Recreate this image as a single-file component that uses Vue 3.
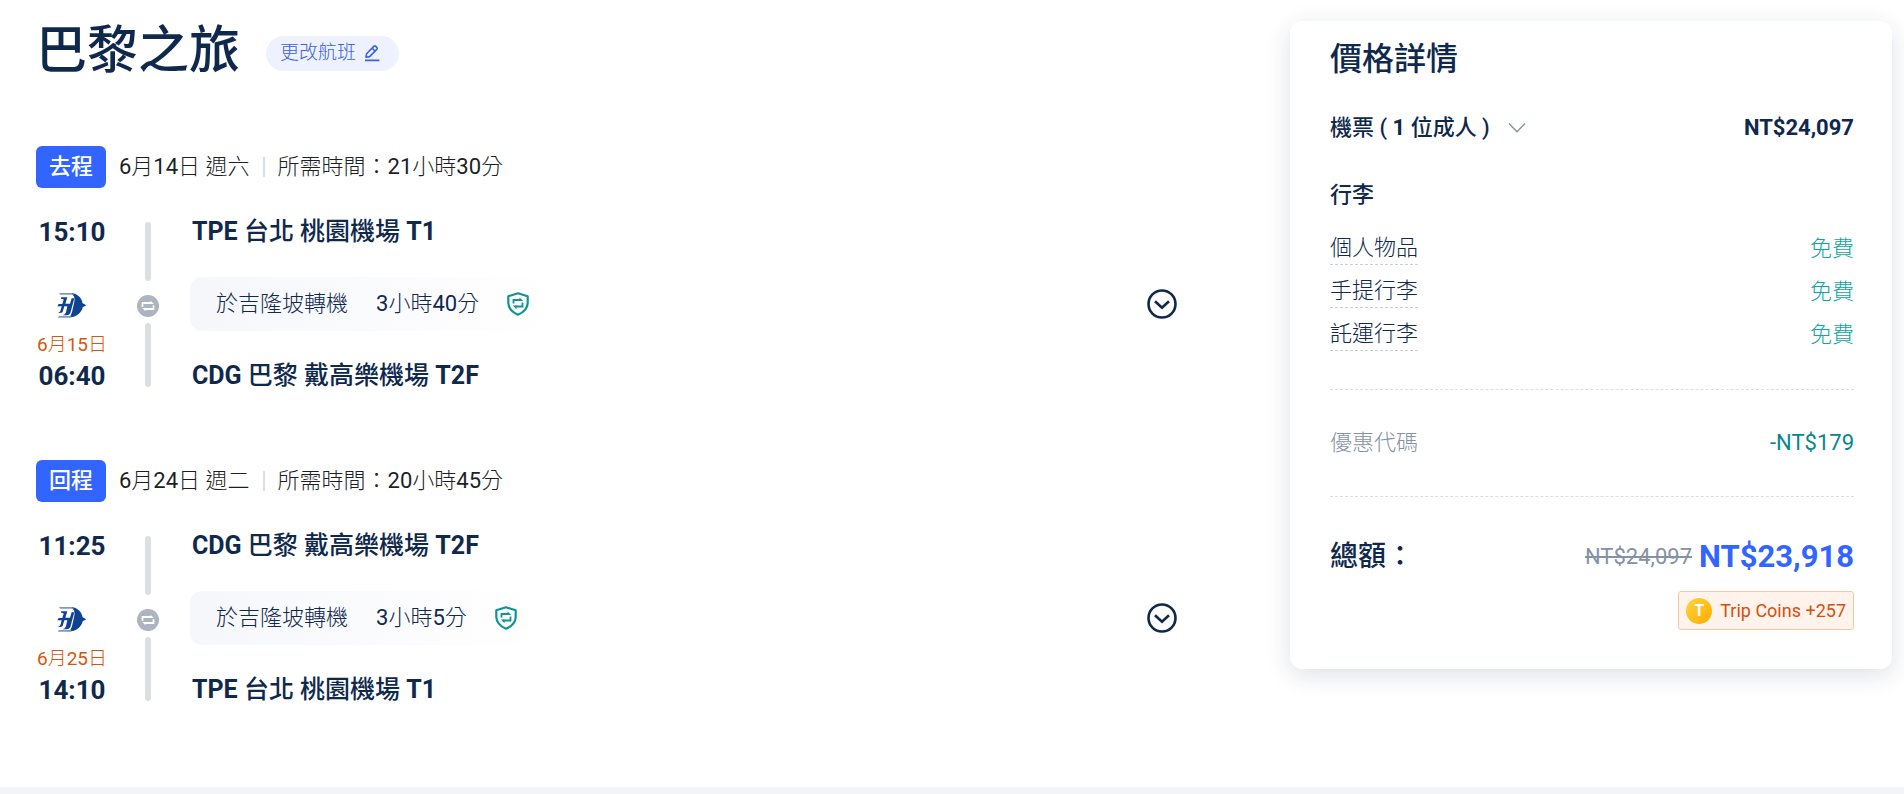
<script setup>
const trips = [
  {
    tag: '去程',
    date: '6月14日 週六',
    duration: '21小時30分',
    depart: '15:10',
    from: { code: 'TPE', name: '台北 桃園機場', terminal: 'T1' },
    stop: '於吉隆坡轉機',
    wait: '3小時40分',
    nextDay: '6月15日',
    arrive: '06:40',
    to: { code: 'CDG', name: '巴黎 戴高樂機場', terminal: 'T2F' }
  },
  {
    tag: '回程',
    date: '6月24日 週二',
    duration: '20小時45分',
    depart: '11:25',
    from: { code: 'CDG', name: '巴黎 戴高樂機場', terminal: 'T2F' },
    stop: '於吉隆坡轉機',
    wait: '3小時5分',
    nextDay: '6月25日',
    arrive: '14:10',
    to: { code: 'TPE', name: '台北 桃園機場', terminal: 'T1' }
  }
]
const baggage = ['個人物品', '手提行李', '託運行李']
</script>

<template>
  <div class="page">
    <main class="content">
      <section class="trip">
        <header class="trip-head">
          <h1>巴黎之旅</h1>
          <button type="button" class="change">
            更改航班
            <svg width="18" height="18" viewBox="0 0 18 18" fill="none" stroke="currentColor" stroke-width="1.6" stroke-linejoin="round" aria-hidden="true">
              <path d="M3 13.2 3.6 9.8 10.8 2.4Q11.8 1.5 12.8 2.4L13.8 3.4Q14.7 4.4 13.8 5.4L6.6 12.6Z" />
              <path d="M9.2 4.2 12 7M2 16.4H16.4" />
            </svg>
          </button>
        </header>

        <article v-for="trip in trips" :key="trip.tag" class="leg">
          <div class="leg-head">
            <span class="tag">{{ trip.tag }}</span>
            <span>{{ trip.date }}</span>
            <i class="bar"></i>
            <span>所需時間：{{ trip.duration }}</span>
          </div>
          <div class="leg-body">
            <div class="times">
              <time class="time">{{ trip.depart }}</time>
              <svg class="airline" width="30" height="25" viewBox="0 0 90 75" role="img" aria-label="Malaysia Airlines">
                <path fill="#0f4290" d="M40 0C60 1 73 12 77 31L88 37L77 43C73 61 58 73 34 74Q42 70 45 58L52 26Q56 8 40 0Z" />
                <path fill="#7f9bc4" d="M6 0H42L52 5H10Z" />
                <path fill="#7f9bc4" d="M2 74H36L44 69H6Z" />
                <path fill="#0f4290" d="M12 13H31L25 32H39L44 16H52L40 60Q37 67 28 67H17Q25 65 27 58L31 40H22L17 56Q15 60 8 60H3Q9 58 11 52L14 40H1L5 33H16L20 20Q20 17 12 17Z" />
              </svg>
              <span class="next-day">{{ trip.nextDay }}</span>
              <time class="time">{{ trip.arrive }}</time>
            </div>
            <div class="track">
              <i class="line"></i>
              <svg width="22" height="22" viewBox="0 0 22 22" fill="none" aria-hidden="true">
                <circle cx="11" cy="11" r="11" fill="#acb4bf" />
                <path stroke="#fff" stroke-width="1.8" d="M5.500 11.800V8H15M16.500 10.200V14H7" />
                <path fill="#fff" d="M13.500 5.800 17 8.900H13.500ZM8.500 16.300 5 13.100H8.500Z" />
              </svg>
              <i class="line lower"></i>
            </div>
            <div class="stops">
              <p class="airport"><b>{{ trip.from.code }}</b> {{ trip.from.name }} <b>{{ trip.from.terminal }}</b></p>
              <div class="middle">
                <div class="transfer">
                  <span>{{ trip.stop }}</span>
                  <span>{{ trip.wait }}</span>
                  <svg width="22" height="24" viewBox="0 0 22 24" fill="none" stroke="#0e9398" aria-hidden="true">
                    <path stroke-width="2.2" stroke-linejoin="round" d="M11 1.3 20.7 4.3V11Q20.4 18.8 11 22.7Q1.6 18.8 1.3 11V4.3Z" />
                    <path stroke-width="1.8" d="M6.500 11.500V8H14M15.500 10.500V14.500H8" />
                    <path fill="#0e9398" stroke="none" d="M12.500 5.500 16.200 8.900H12.500ZM9.500 17.200 5.800 13.600H9.500Z" />
                  </svg>
                </div>
                <button type="button" class="expand" aria-label="展開航班詳情">
                  <svg width="30" height="30" viewBox="0 0 30 30" fill="none" stroke="currentColor" stroke-width="2.6" aria-hidden="true">
                    <circle cx="15" cy="15" r="13.5" />
                    <path d="M8 12.2 15 18.8 22 12.2" />
                  </svg>
                </button>
              </div>
              <p class="airport"><b>{{ trip.to.code }}</b> {{ trip.to.name }} <b>{{ trip.to.terminal }}</b></p>
            </div>
          </div>
        </article>
      </section>

      <aside class="card">
        <h2>價格詳情</h2>
        <div class="row ticket">
          <button type="button" class="toggle">
            <span>機票 ( <b>1</b> 位成人 )</span>
            <svg width="18" height="12" viewBox="0 0 18 12" fill="none" stroke="#8592a6" stroke-width="1.5" aria-hidden="true">
              <path d="M1 1.5 9 9.7 17 1.5" />
            </svg>
          </button>
          <strong>NT$24,097</strong>
        </div>
        <h3>行李</h3>
        <div v-for="item in baggage" :key="item" class="row bag">
          <span class="hint">{{ item }}</span>
          <span class="free">免費</span>
        </div>
        <div class="row promo">
          <span>優惠代碼</span>
          <span class="off">-NT$179</span>
        </div>
        <div class="row total">
          <strong class="total-label">總額：</strong>
          <div class="amounts">
            <s>NT$24,097</s>
            <strong class="final">NT$23,918</strong>
          </div>
        </div>
        <div class="coins-row">
          <span class="coins"><b class="coin">T</b>Trip Coins +257</span>
        </div>
      </aside>
    </main>
    <div class="strip"></div>
  </div>
</template>

<style>
body {
  margin: 0;
  background: #fff;
}
</style>

<style scoped>
.page {
  display: flex;
  flex-direction: column;
  min-height: 100vh;
  color: #0f294d;
  font-family: Roboto, "Noto Sans CJK TC Light", "Noto Sans CJK TC", sans-serif;
  font-size: 22px;
  font-weight: 400;
  line-height: 32px;
}
h1, h2, h3, p {
  margin: 0;
}
h1, h2, h3, .tag, .airport, .ticket, .total {
  font-family: Roboto, "Noto Sans CJK TC", sans-serif;
}
b {
  font-weight: 700;
}
button {
  padding: 0;
  border: 0;
  background: none;
  color: inherit;
  font: inherit;
  cursor: pointer;
}
.content {
  flex: 1;
  display: grid;
  grid-template-columns: minmax(0, 1fr) minmax(440px, 602px);
  align-items: start;
  gap: 112px;
  padding: 21px 12px 40px 36px;
}
.strip {
  height: 7px;
  background: #f2f4f7;
}
.trip-head {
  display: flex;
  align-items: center;
  gap: 26px;
  height: 60px;
}
h1 {
  font-size: 51px;
  font-weight: 500;
  line-height: 60px;
}
.change {
  display: flex;
  align-items: center;
  gap: 7px;
  height: 35px;
  margin-top: 4px;
  padding: 0 18px 0 14px;
  border-radius: 18px;
  background: #eef2ff;
  color: #3a61e0;
  font-size: 19px;
  white-space: nowrap;
}
.leg {
  margin-top: 65px;
}
.leg + .leg {
  margin-top: 67px;
}
.leg-head {
  display: flex;
  align-items: center;
  height: 42px;
  color: #1c1f26;
}
.tag {
  width: 70px;
  margin-right: 13px;
  border-radius: 6px;
  background: #3264ff;
  color: #fff;
  font-weight: 500;
  line-height: 42px;
  text-align: center;
}
.bar {
  width: 2px;
  height: 20px;
  margin: 0 13px;
  background: #dadfe6;
}
.leg-body {
  display: grid;
  grid-template-columns: 70px 22px minmax(0, 1fr);
  column-gap: 31px;
  margin-top: 27px;
}
.times {
  display: flex;
  flex-direction: column;
  align-items: center;
  padding-left: 2px;
}
.time {
  font-size: 26px;
  font-weight: 700;
  line-height: 34px;
}
.airline {
  margin: 44px 0 13px;
}
.next-day {
  color: #d4570f;
  font-size: 19px;
  line-height: 28px;
  white-space: nowrap;
}
.track {
  display: flex;
  flex-direction: column;
  align-items: center;
  padding: 7px 0 6px;
}
.track svg {
  flex: none;
  margin: 14px 0 6px;
}
.line {
  flex: 10;
  width: 6px;
  border-radius: 3px;
  background: #dadfe6;
}
.lower {
  flex-grow: 11;
}
.stops {
  display: flex;
  flex-direction: column;
  justify-content: space-between;
}
.airport {
  padding-left: 2px;
  font-size: 25px;
  font-weight: 500;
  line-height: 34px;
}
.middle {
  display: flex;
  align-items: center;
  justify-content: space-between;
}
.transfer {
  display: flex;
  align-items: center;
  gap: 28px;
  height: 54px;
  padding: 0 26px;
  border-radius: 12px;
  background: linear-gradient(90deg, #f6f7fb, #fff);
}
.expand {
  display: flex;
  margin-right: 1px;
}
.card {
  box-sizing: border-box;
  padding: 18px 38px 39px 40px;
  border-radius: 12px;
  background: #fff;
  box-shadow: 0 6px 24px rgba(15, 41, 77, 0.14);
}
h2 {
  font-size: 32px;
  font-weight: 500;
  line-height: 40px;
}
h3 {
  margin: 35px 0 16px;
  font-size: 22px;
  font-weight: 500;
}
.row {
  display: flex;
  align-items: center;
  justify-content: space-between;
}
.ticket {
  margin-top: 33px;
  font-weight: 500;
}
.ticket strong {
  font-weight: 700;
}
.toggle {
  display: flex;
  align-items: center;
  gap: 18px;
}
.bag {
  height: 43px;
}
.hint {
  border-bottom: 1px dashed #c9d0da;
}
.free {
  color: #0ea5a5;
}
.promo {
  height: 106px;
  margin-top: 33px;
  border: dashed #dadfe6;
  border-width: 1px 0;
  color: #8592a6;
}
.off {
  color: #06878c;
}
.total {
  height: 40px;
  margin-top: 40px;
}
.total-label {
  font-size: 28px;
  font-weight: 500;
}
.amounts {
  display: flex;
  align-items: center;
  gap: 7px;
}
.amounts s {
  color: #8592a6;
}
.final {
  color: #3264ff;
  font-size: 31px;
  font-weight: 700;
}
.coins-row {
  display: flex;
  justify-content: flex-end;
  margin-top: 14px;
}
.coins {
  display: flex;
  align-items: center;
  gap: 8px;
  padding: 0 7px;
  border: 1px solid #f5c9a8;
  border-radius: 3px;
  background: #fff3ec;
  color: #d4500f;
  font-size: 18px;
  line-height: 37px;
}
.coin {
  width: 26px;
  border-radius: 50%;
  background: linear-gradient(135deg, #ffd43a, #ffab00);
  color: #fff;
  font-size: 16px;
  line-height: 26px;
  text-align: center;
}
</style>
